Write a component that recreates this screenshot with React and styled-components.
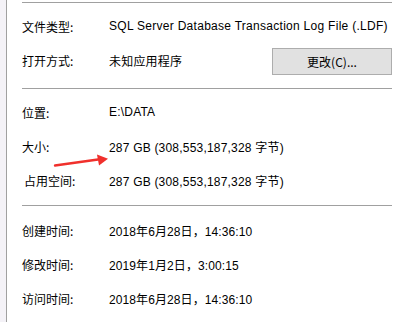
import React from 'react';
import styled, { createGlobalStyle } from 'styled-components';

const GlobalStyle = createGlobalStyle`
  html, body {
    margin: 0;
    padding: 0;
    background: #ffffff;
  }
  body {
    font-family: "Liberation Sans", "Noto Sans CJK SC", sans-serif;
    font-size: 12px;
    color: #000;
  }
`;

const Frame = styled.div`
  position: relative;
  display: flex;
  width: 409px;
  height: 322px;
  overflow: hidden;
`;

const Gutter = styled.div`
  width: 6px;
  background: #f4f2f7;
  border-right: 1px solid #a0a0a0;
`;

const Panel = styled.div`
  flex: 1;
  padding: 2px 17px 0 15px;
`;

const Separator = styled.div`
  height: 1px;
  background: #a0a0a0;
`;

const Section = styled.div`
  padding: ${p => p.$top}px 0 ${p => p.$bottom}px;
`;

const Row = styled.div`
  display: flex;
  align-items: center;
  height: 34px;
`;

const Label = styled.div`
  width: 87px;
  padding-left: ${p => p.$indent || 0}px;
  box-sizing: border-box;
  font-family: "Noto Sans CJK SC", sans-serif;
  white-space: nowrap;
`;

const Value = styled.div`
  white-space: nowrap;
  letter-spacing: ${p => p.$spacing || 0.2}px;
  font-family: "Liberation Sans", "Noto Sans CJK SC", sans-serif;
`;

const Button = styled.button`
  margin-left: auto;
  width: 120px;
  height: 27px;
  margin-top: 3px;
  background: #e1e1e1;
  border: 1px solid #adadad;
  font-family: "Noto Sans CJK SC", sans-serif;
  font-size: 12px;
  color: #000;
  padding: 0;
`;

const Arrow = styled.svg`
  position: absolute;
  left: 50px;
  top: 150px;
`;

const Field = ({ label, value, indent, spacing, children }) => (
  <Row>
    <Label $indent={indent}>{label}</Label>
    <Value $spacing={spacing}>{value}</Value>
    {children}
  </Row>
);

export default function App() {
  return (
    <>
      <GlobalStyle />
      <Frame>
        <Gutter />
        <Panel>
          <Separator />
          <Section $top={6} $bottom={11}>
            <Field label="文件类型:" spacing={0.28} value="SQL Server Database Transaction Log File (.LDF)" />
            <Field label="打开方式:" value="未知应用程序">
              <Button>更改(C)...</Button>
            </Field>
          </Section>
          <Separator />
          <Section $top={6} $bottom={8}>
            <Field label="位置:" value="E:\DATA" />
            <Field label="大小:" value="287 GB (308,553,187,328 字节)" />
            <Field label="占用空间:" indent={2} value="287 GB (308,553,187,328 字节)" />
          </Section>
          <Separator />
          <Section $top={7} $bottom={0}>
            <Field label="创建时间:" spacing={0.1} value="2018年6月28日，14:36:10" />
            <Field label="修改时间:" spacing={0.1} value="2019年1月2日，3:00:15" />
            <Field label="访问时间:" spacing={0.1} value="2018年6月28日，14:36:10" />
          </Section>
        </Panel>
        <Arrow width="62" height="20" viewBox="0 0 62 20">
          <path d="M5 15.5 L48 9.5" stroke="#f0302c" strokeWidth="2.4" strokeLinecap="round" />
          <path d="M47 4.5 L58 8.8 L49 15.5 Z" fill="#f0302c" />
        </Arrow>
      </Frame>
    </>
  );
}
